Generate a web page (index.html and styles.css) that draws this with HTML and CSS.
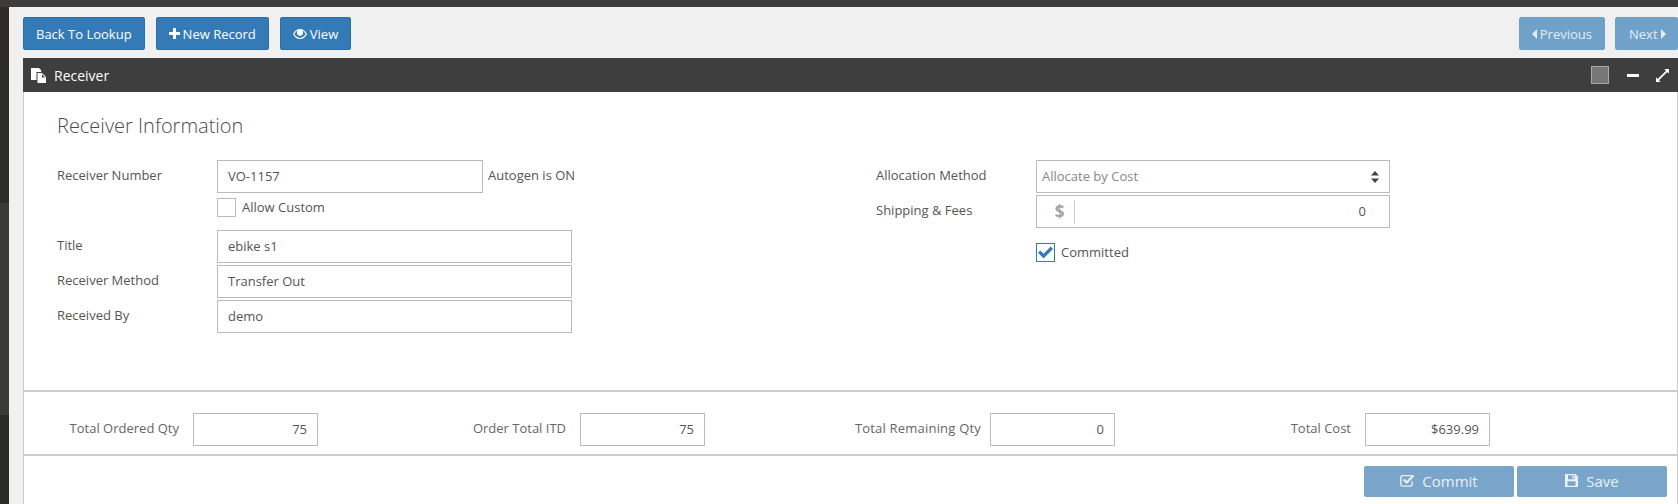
FILE: index.html
```html
<!DOCTYPE html>
<html lang="en">
<head>
<meta charset="utf-8">
<title>Receiver</title>
<link rel="stylesheet" href="styles.css">
</head>
<body>
<div class="topbar"></div>
<div class="shell">
  <div class="rail"></div>
  <main class="main">
    <div class="toolbar">
      <div class="btn-group">
        <button class="btn">Back To Lookup</button>
        <button class="btn"><svg class="ic ic-plus" viewBox="0 0 12 12"><path d="M4.400 0h3.200v4.400H12v3.200H7.600V12H4.400V7.600H0V4.400h4.400z"/></svg>New Record</button>
        <button class="btn"><svg class="ic ic-eye" viewBox="0 0 14 10"><path fill-rule="evenodd" d="M7 0c3 0 5.600 2 7 5-1.400 3-4 5-7 5S1.400 8 0 5c1.400-3 4-5 7-5zM1.300 5C2.500 7.300 4.600 8.900 7 8.900S11.500 7.300 12.700 5C11.800 3.400 10.600 2.200 9.200 1.500c.5.600.8 1.400.8 2.300a3 3 0 0 1-6 0c0-.9.300-1.700.8-2.300C3.400 2.200 2.200 3.400 1.300 5z"/></svg>View</button>
      </div>
      <div class="btn-group btn-group-pager">
        <button class="btn btn-muted"><svg class="ic ic-caret" viewBox="0 0 5 10"><path d="M5 0v10L0 5z"/></svg>Previous</button>
        <button class="btn btn-muted btn-next">Next<svg class="ic ic-caret ic-after" viewBox="0 0 5 10"><path d="M0 0v10l5-5z"/></svg></button>
      </div>
    </div>
    <section class="panel">
      <header class="panel-head">
        <svg class="ic-files" viewBox="0 0 15 15"><path fill-rule="evenodd" d="M0 0h8l2.200 2.200V4H5.500v8H0zM6.500 5h4.500L15 9v6H6.500zM11 6.300V9.600h3z"/></svg>
        <span class="panel-title">Receiver</span>
        <div class="panel-tools">
          <span class="tool-square"></span>
          <span class="tool-minus"></span>
          <svg class="tool-expand" viewBox="0 0 14 14"><path d="M9 0h5v5l-1.800-1.800-9 9L5 14H0V9l1.800 1.800 9-9z"/></svg>
        </div>
      </header>
      <div class="panel-body">
        <h2 class="section-title">Receiver Information</h2>
        <div class="form-cols">
          <div class="col col-left">
            <div class="row">
              <label class="lbl">Receiver Number</label>
              <div class="field field-short">VO-1157</div>
              <span class="hint">Autogen is ON</span>
            </div>
            <div class="check-row">
              <span class="checkbox"></span>
              <span class="check-label">Allow Custom</span>
            </div>
            <div class="row row-title">
              <label class="lbl">Title</label>
              <div class="field field-wide">ebike s1</div>
            </div>
            <div class="row row-tight">
              <label class="lbl">Receiver Method</label>
              <div class="field field-wide">Transfer Out</div>
            </div>
            <div class="row row-tight">
              <label class="lbl">Received By</label>
              <div class="field field-wide">demo</div>
            </div>
          </div>
          <div class="col col-right">
            <div class="row">
              <label class="lbl">Allocation Method</label>
              <div class="field field-right field-select">
                <span>Allocate by Cost</span>
                <svg class="ic-sort" viewBox="0 0 8 12"><path d="M4 0l4 4.600H0zM0 7.400h8L4 12z"/></svg>
              </div>
            </div>
            <div class="row row-tight">
              <label class="lbl">Shipping &amp; Fees</label>
              <div class="field field-right field-money">
                <span class="addon">$</span>
                <span class="money-value">0</span>
              </div>
            </div>
            <div class="check-row check-committed">
              <span class="checkbox checkbox-on"><svg viewBox="0 0 14 12"><path d="M5.200 11.500L0 6.300l2.200-2.200 3 3L11.800.5 14 2.700z"/></svg></span>
              <span class="check-label">Committed</span>
            </div>
          </div>
        </div>
      </div>
      <div class="totals">
        <div class="total total-a"><label class="total-lbl">Total Ordered Qty</label><div class="field total-field">75</div></div>
        <div class="total total-b"><label class="total-lbl">Order Total ITD</label><div class="field total-field">75</div></div>
        <div class="total total-c"><label class="total-lbl">Total Remaining Qty</label><div class="field total-field">0</div></div>
        <div class="total total-d"><label class="total-lbl">Total Cost</label><div class="field total-field">$639.99</div></div>
      </div>
      <footer class="actions">
        <button class="action"><svg class="ic-act" viewBox="0 0 15 13"><path fill-rule="evenodd" d="M2.500 1H11c.5 0 .9.100 1.300.3l-1 1H2.500C2 2.300 1.600 2.700 1.600 3.200v7.300c0 .5.400.9.900.9h8c.5 0 .9-.4.900-.9V7.800l1.300-1.300v4c0 1.300-1 2.300-2.200 2.300h-8C1.200 12.800.2 11.800.2 10.500V3.200C.2 2 1.200 1 2.500 1z"/><path d="M6.600 10L2.900 6.300l1.500-1.500 2.200 2.200L12.800.8l1.500 1.500z"/></svg>Commit</button>
        <button class="action"><svg class="ic-act ic-save" viewBox="0 0 13 13"><path fill-rule="evenodd" d="M0 0h10.500L13 2.500V13H0zM3 1.300v3.900h6.500V1.300zM7.300 1.800h1.500v2.800H7.300zM2.500 7.300v4.400h8V7.300z"/></svg>Save</button>
      </footer>
    </section>
  </main>
</div>
</body>
</html>
```

FILE: styles.css
```css
* { box-sizing: border-box; }
html, body { margin: 0; height: 504px; overflow: hidden; }
body {
  background: #f0f0f0;
  font-family: "Open Sans", sans-serif;
  font-size: 13px;
  color: #555;
  display: flex;
  flex-direction: column;
}
.topbar { height: 7px; background: #3e3c3b; flex: none; }
.shell { flex: 1; display: flex; min-height: 0; }
.rail { width: 9px; flex: none; background: linear-gradient(#2f2c28 0, #2f2c28 196px, #3a3a38 196px, #3a3a38 408px, #2d2a26 408px); }
.main { flex: 1; min-width: 0; padding: 10px 0 0 14px; display: flex; flex-direction: column; }

.toolbar { display: flex; justify-content: space-between; height: 33px; flex: none; margin-bottom: 8px; }
.btn-group { display: flex; gap: 11px; }
.btn-group-pager { gap: 10px; }
.btn {
  height: 33px;
  padding: 0 12px;
  border: 1px solid #2e6da4;
  border-radius: 2px;
  background: #337ab7;
  color: #fff;
  font: 13px "Open Sans", sans-serif;
  display: flex;
  align-items: center;
}
.btn-muted { background: #70a1c9; border-color: #70a1c9; color: #e4edf5; }
.btn-next { width: 63px; padding: 0 0 0 13px; }
.ic { fill: currentColor; display: block; flex: none; }
.ic-plus { width: 11px; height: 11px; margin-right: 3px; }
.ic-eye { width: 14px; height: 10px; margin-right: 3px; }
.ic-caret { width: 5px; height: 10px; margin-right: 3px; }
.ic-after { margin: 0 0 0 3px; }

.panel { flex: 1; min-height: 0; display: flex; flex-direction: column; background: #fff; border-left: 1px solid #ccc; border-right: 1px solid #ccc; }
.panel-head { height: 34px; flex: none; margin-left: -1px; margin-right: -1px; background: #3e3e3e; color: #fff; display: flex; align-items: center; padding-left: 8px; }
.ic-files { width: 15px; height: 15px; fill: #fff; margin-right: 8px; }
.panel-title { font-size: 14px; }
.panel-tools { margin-left: auto; display: flex; align-items: center; }
.tool-square { width: 18px; height: 18px; background: #777; border: 1px solid #aaa; }
.tool-minus { width: 12px; height: 3px; background: #fff; margin-left: 18px; }
.tool-expand { width: 13px; height: 13px; fill: #fff; margin-left: 17px; margin-right: 9px; }

.panel-body { height: 300px; flex: none; padding: 20px 33px 0; border-bottom: 2px solid #ccc; }
.section-title { margin: 0 0 20px; font-weight: 300; font-size: 20px; line-height: 28px; color: #4d4d4d; }
.form-cols { display: flex; }
.col-left { width: 819px; }
.row { display: flex; align-items: flex-start; }
.row-title { margin-top: 13px; }
.row-tight { margin-top: 2px; }
.lbl { width: 160px; flex: none; line-height: 30px; color: #555; }
.field { height: 33px; border: 1px solid #bbb; padding: 0 10px; line-height: 31px; color: #555; background: #fff; }
.field-short { width: 266px; }
.field-wide { width: 355px; }
.hint { line-height: 30px; margin-left: 5px; }
.check-row { display: flex; align-items: center; margin: 5px 0 0 160px; height: 19px; }
.checkbox { width: 19px; height: 19px; border: 1px solid #bbb; display: block; flex: none; }
.check-label { margin: 0 0 2px 6px; }
.checkbox-on { border-color: #337ab7; border-width: 1.5px; display: flex; align-items: center; justify-content: center; }
.checkbox-on svg { width: 15px; height: 13px; fill: #337ab7; flex: none; }
.check-committed { margin: 15px 0 0 160px; }
.field-right { width: 354px; }
.field-select { display: flex; align-items: center; justify-content: space-between; padding: 0 10px 0 5px; color: #888; }
.ic-sort { width: 8px; height: 12px; fill: #444; }
.field-money { display: flex; align-items: center; padding: 0 23px 0 0; }
.addon { width: 38px; height: 24px; line-height: 24px; padding-left: 8px; text-align: center; border-right: 1px solid #ccc; font-size: 17px; font-weight: 700; color: #a3a3a3; }
.money-value { margin-left: auto; }

.totals { height: 64px; flex: none; border-bottom: 2px solid #ccc; display: flex; padding-top: 21px; }
.total { flex: none; display: flex; justify-content: flex-end; gap: 14px; }
.total-a { width: 294px; }
.total-b { width: 387px; }
.total-c { width: 410px; gap: 9px; }
.total-c .total-lbl { letter-spacing: .2px; }
.total-d { width: 375px; }
.total-lbl { line-height: 30px; color: #666; }
.total-field { width: 125px; height: 33px; text-align: right; }

.actions { flex: 1; display: flex; justify-content: flex-end; gap: 3px; padding: 10px 10px 0 0; }
.action {
  width: 150px;
  height: 31px;
  padding: 0 0 2px;
  border: 0;
  border-radius: 2px;
  background: #7aa5ca;
  color: #e9f0f6;
  font: 15px "Open Sans", sans-serif;
  display: flex;
  align-items: center;
  justify-content: center;
}
.ic-act { width: 15px; height: 13px; fill: currentColor; margin-right: 7px; }
.ic-save { width: 13px; margin-right: 8px; }
```
